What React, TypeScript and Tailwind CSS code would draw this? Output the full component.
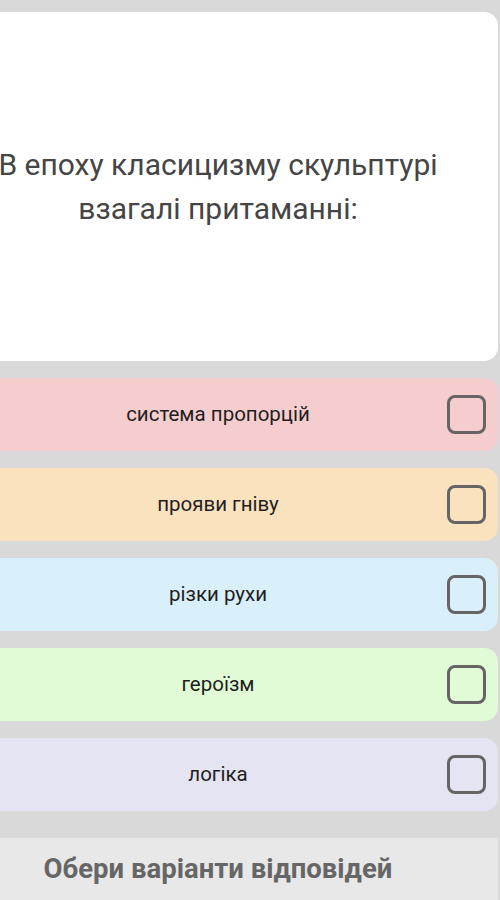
import React from "react";

interface Choice {
    label: string;
    bg: string;
}

const choices: Choice[] = [
    { label: "система пропорцій", bg: "bg-[#f6cdcf]" },
    { label: "прояви гніву", bg: "bg-[#fbe2bf]" },
    { label: "різки рухи", bg: "bg-[#d9eff9]" },
    { label: "героїзм", bg: "bg-[#e2fbd7]" },
    { label: "логіка", bg: "bg-[#e4e4f2]" },
];

function Checkbox() {
    return <div className="w-[39px] h-[39px] shrink-0 rounded-[8px] border-[3px] border-[#666464]" />;
}

export default function App() {
    return (
        <div className="w-[500px] h-[900px] overflow-hidden bg-[#d9d9d9] font-['Roboto',sans-serif]">
            <div className="-ml-[62px] w-[560px] flex flex-col pt-[12px]">
                {/* question card */}
                <div className="h-[349px] bg-white rounded-[14px] flex items-center justify-center px-4">
                    <p className="text-center text-[30px] leading-[44px] text-[#454545]">
                        В епоху класицизму скульптурі
                        <br />
                        взагалі притаманні:
                    </p>
                </div>

                {/* answer options */}
                <div className="flex flex-col gap-[17px] mt-[17px]">
                    {choices.map((c, i) => (
                        <div
                            key={i}
                            className={`h-[73px] rounded-[14px] flex items-center pl-[51px] pr-[12px] ${c.bg}`}
                        >
                            <span className="flex-1 text-center text-[20.5px] text-[#1f1f1f]">{c.label}</span>
                            <Checkbox />
                        </div>
                    ))}
                </div>

                {/* footer */}
                <div className="mt-[27px] h-[62px] bg-[#e8e8e8] flex items-center justify-center">
                    <span className="text-[27.5px] font-bold text-[#666666]">Обери варіанти відповідей</span>
                </div>
            </div>
        </div>
    );
}
